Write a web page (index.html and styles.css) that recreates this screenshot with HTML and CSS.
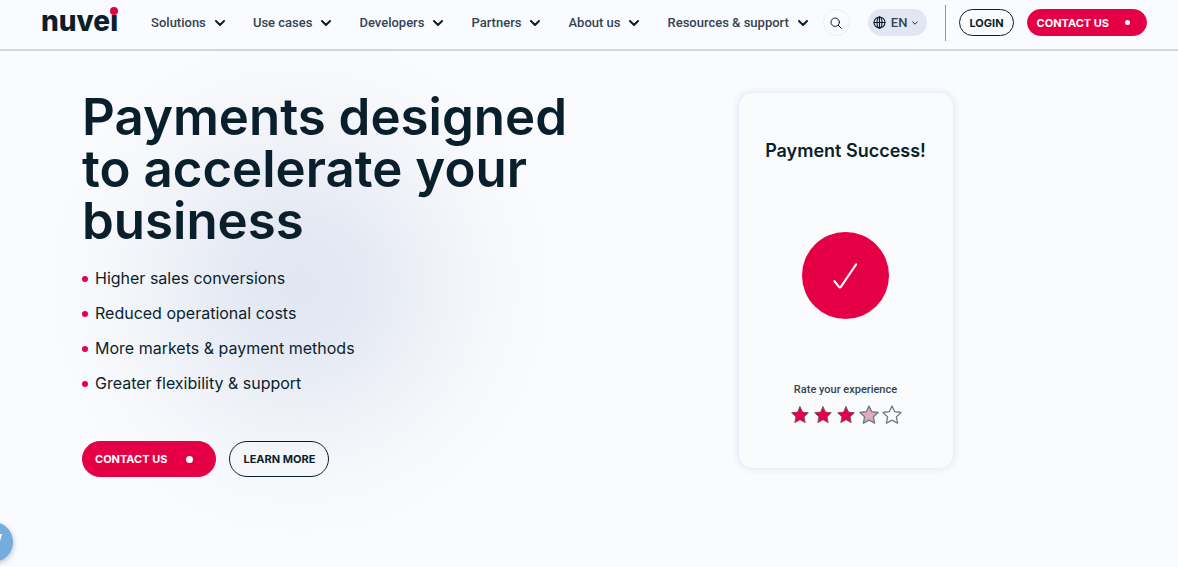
FILE: index.html
```
<!DOCTYPE html>
<html lang="en">

<head>
    <meta charset="UTF-8">
    <meta name="viewport" content="width=device-width, initial-scale=1.0">
    <title>Nuvei</title>
    <link rel="stylesheet" href="styles.css">
</head>

<body>
    <header class="header">
        <a class="logo" href="#">nuvei<span class="logo-dot"></span></a>

        <nav class="nav">
            <button class="nav-item" type="button">Solutions <svg class="chevron" viewBox="0 0 10 6"><path d="M1 1l4 4 4-4"/></svg></button>
            <button class="nav-item" type="button">Use cases <svg class="chevron" viewBox="0 0 10 6"><path d="M1 1l4 4 4-4"/></svg></button>
            <button class="nav-item" type="button">Developers <svg class="chevron" viewBox="0 0 10 6"><path d="M1 1l4 4 4-4"/></svg></button>
            <button class="nav-item" type="button">Partners <svg class="chevron" viewBox="0 0 10 6"><path d="M1 1l4 4 4-4"/></svg></button>
            <button class="nav-item" type="button">About us <svg class="chevron" viewBox="0 0 10 6"><path d="M1 1l4 4 4-4"/></svg></button>
            <button class="nav-item" type="button">Resources &amp; support <svg class="chevron" viewBox="0 0 10 6"><path d="M1 1l4 4 4-4"/></svg></button>
        </nav>

        <div class="tools">
            <button class="search" type="button" aria-label="Search">
                <svg viewBox="0 0 12 12"><circle cx="5.2" cy="5.2" r="4.2"/><path d="M8.3 8.3l3 3"/></svg>
            </button>
            <button class="lang" type="button">
                <svg class="globe" viewBox="0 0 14 14"><circle cx="7" cy="7" r="5.9"/><ellipse cx="7" cy="7" rx="2.7" ry="5.9"/><path d="M1 7h12M7 1v12"/></svg>
                EN
                <svg class="lang-chevron" viewBox="0 0 10 6"><path d="M1 1l4 4 4-4"/></svg>
            </button>
        </div>

        <div class="account">
            <a class="btn btn-outline btn-small" href="#">LOGIN</a>
            <a class="btn btn-red btn-small" href="#">CONTACT US</a>
        </div>
    </header>

    <main class="hero">
        <section class="intro">
            <h1>Payments designed to accelerate your business</h1>
            <ul class="benefits">
                <li>Higher sales conversions</li>
                <li>Reduced operational costs</li>
                <li>More markets &amp; payment methods</li>
                <li>Greater flexibility &amp; support</li>
            </ul>
            <div class="actions">
                <a class="btn btn-red" href="#">CONTACT US</a>
                <a class="btn btn-outline" href="#">LEARN MORE</a>
            </div>
        </section>

        <section class="card">
            <h2>Payment Success!</h2>
            <svg class="check" viewBox="0 0 86 86"><circle cx="43" cy="43" r="43"/><path d="M32 48.5l4.6 5.8q1 1 1.8 0L53.500 32"/></svg>
            <p class="rate">Rate your experience</p>
            <div class="stars">
                <svg class="star full" viewBox="0 0 20 20"><path d="M10 1.800l2.500 5.300 5.800.700-4.300 4 1.200 5.800-5.200-2.900-5.200 2.900 1.200-5.800-4.300-4 5.800-.700z"/></svg>
                <svg class="star full" viewBox="0 0 20 20"><path d="M10 1.800l2.500 5.300 5.800.700-4.300 4 1.200 5.800-5.200-2.900-5.200 2.900 1.200-5.800-4.300-4 5.800-.700z"/></svg>
                <svg class="star full" viewBox="0 0 20 20"><path d="M10 1.800l2.500 5.300 5.800.700-4.300 4 1.200 5.800-5.200-2.900-5.200 2.900 1.200-5.800-4.300-4 5.800-.700z"/></svg>
                <svg class="star half" viewBox="0 0 20 20"><path d="M10 1l2.700 5.700 6.300.800-4.600 4.400 1.200 6.300-5.600-3.100-5.600 3.100 1.200-6.300L1 7.500l6.300-.800z"/></svg>
                <svg class="star" viewBox="0 0 20 20"><path d="M10 1l2.700 5.700 6.300.800-4.600 4.400 1.200 6.300-5.600-3.100-5.600 3.100 1.200-6.300L1 7.500l6.300-.800z"/></svg>
            </div>
        </section>
    </main>

    <button class="chat" type="button" aria-label="Open chat">
        <svg viewBox="0 0 40 40"><path d="M20 12h9l-1 4q-1 4-4 4h-4z"/></svg>
    </button>
</body>

</html>
```
FILE: styles.css
```
* {
    box-sizing: border-box;
}

body {
    margin: 0;
    min-height: 100vh;
    font-family: Inter, "Liberation Sans", sans-serif;
    color: #0a1f2c;
    background: #fafbfe radial-gradient(circle at 300px 285px, #e2e6f2 0, #e5e9f3 65px, #eff2f8 140px, #f6f8fb 200px, #fafbfe 260px) no-repeat;
    overflow: hidden;
}

button {
    font-family: inherit;
    color: inherit;
    padding: 0;
    border: 0;
    background: none;
    cursor: pointer;
}

svg {
    display: block;
    fill: none;
    stroke: #0a1f2c;
    stroke-linecap: round;
    stroke-linejoin: round;
}

.header {
    display: flex;
    align-items: center;
    height: 51px;
    padding: 0 31px 4px 41px;
    background: #fafbfe;
    border-bottom: 2px solid #d3d5df;
}

.logo {
    position: relative;
    font-size: 28px;
    font-weight: 800;
    line-height: 32px;
    padding-bottom: 4px;
    color: #0a1f2c;
    text-decoration: none;
}

/* red dot sits on top of the i */
.logo-dot {
    position: absolute;
    top: 2px;
    right: 0;
    width: 8px;
    height: 8px;
    border-radius: 50%;
    background: #e50046;
}

.nav {
    display: flex;
    flex: 1;
    justify-content: space-between;
    margin-left: 33px;
}

.nav-item {
    display: flex;
    align-items: center;
    gap: 9px;
    font-family: Roboto, sans-serif;
    font-size: 13px;
    font-weight: 500;
    line-height: 20px;
    color: #334454;
    white-space: nowrap;
}

.chevron {
    width: 10px;
    height: 6px;
    stroke-width: 2;
}

.tools {
    display: flex;
    align-items: center;
    gap: 18px;
    margin: 0 18px 0 15px;
}

.search {
    display: grid;
    place-items: center;
    width: 27px;
    height: 27px;
    border: 1px solid #eceef3;
    border-radius: 50%;
}

.search svg {
    width: 12px;
    height: 12px;
}

.lang {
    display: flex;
    align-items: center;
    gap: 5px;
    height: 27px;
    padding: 0 9px 0 5px;
    border-radius: 14px;
    background: #e2e6f2;
    font-family: Roboto, sans-serif;
    font-size: 13px;
    font-weight: 500;
    color: #334454;
}

.globe {
    width: 13px;
    height: 13px;
    stroke-width: 1.2;
}

.lang-chevron {
    width: 6px;
    height: 4px;
    stroke-width: 1.5;
}

.account {
    display: flex;
    align-items: center;
    gap: 13px;
    height: 36px;
    padding-left: 13px;
    border-left: 1px solid #8f98a1;
}

.btn {
    display: flex;
    align-items: center;
    height: 36px;
    padding: 0 13px;
    border: 1px solid #0a1f2c;
    border-radius: 18px;
    font-size: 11px;
    font-weight: 700;
    color: #0a1f2c;
    text-decoration: none;
    white-space: nowrap;
}

.btn-red {
    padding: 0 12px;
    border-color: #e50046;
    background: #e50046;
    color: #fff;
}

.btn-red::after {
    content: "";
    width: 7px;
    height: 7px;
    margin: 0 10px 0 19px;
    border-radius: 50%;
    background: #fff;
}

.btn-small {
    height: 27px;
    padding: 0 9px;
    border-radius: 14px;
}

.btn-small.btn-red::after {
    width: 5px;
    height: 5px;
    margin: 0 7px 0 16px;
}

.hero {
    display: grid;
    grid-template-columns: 1fr 1fr;
    align-items: start;
    padding: 40px 78px 0 82px;
}

h1 {
    margin: 0;
    font-size: 51px;
    font-weight: 600;
    line-height: 52px;
}

.benefits {
    margin: 14px 0 40px;
    padding: 0;
    list-style: none;
    font-size: 16px;
    line-height: 35px;
}

.benefits li {
    display: flex;
    align-items: center;
    gap: 7px;
}

.benefits li::before {
    content: "";
    width: 6px;
    height: 6px;
    border-radius: 50%;
    background: #e50046;
}

.actions {
    display: flex;
    gap: 13px;
}

.card {
    display: flex;
    flex-direction: column;
    align-items: center;
    justify-self: center;
    width: 214px;
    margin-top: 2px;
    padding: 45px 20px 43px;
    border-radius: 14px;
    background: #fafbfd;
    box-shadow: 0 0 7px 1px #dfe4f1;
}

h2 {
    margin: 0 0 68px;
    font-size: 18px;
    font-weight: 600;
    line-height: 26px;
    white-space: nowrap;
}

.check {
    width: 87px;
    height: 87px;
    stroke: #fff;
    stroke-width: 2;
}

.check circle {
    fill: #e50046;
    stroke: none;
}

.rate {
    margin: 63px 0 7px;
    font-family: Roboto, sans-serif;
    font-size: 11px;
    font-weight: 500;
    line-height: 16px;
    color: #334454;
}

.stars {
    display: flex;
    gap: 3px;
}

.star {
    width: 20px;
    height: 20px;
    stroke: #6b7885;
    stroke-width: 1.3;
}

.full {
    fill: #e50046;
    stroke: #8a4a62;
    stroke-width: 1;
}

.half {
    fill: #dfabb9;
}

.chat {
    position: fixed;
    bottom: 5px;
    left: -27px;
    width: 40px;
    height: 40px;
    border-radius: 50%;
    background: #75acde;
    box-shadow: 1px 2px 5px #c3cad8;
}

.chat path {
    fill: #fff;
    stroke: none;
}
```
